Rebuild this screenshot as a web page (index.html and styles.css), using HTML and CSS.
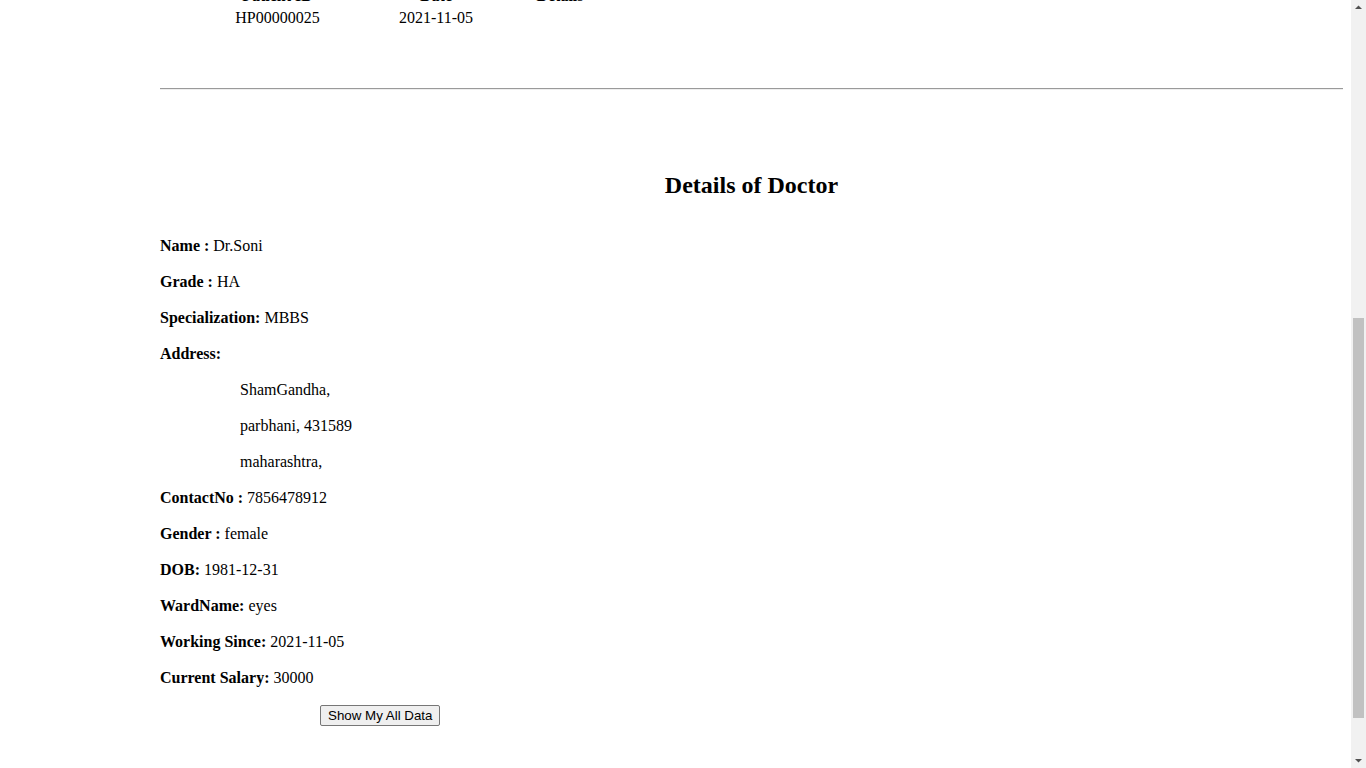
FILE: index.html
```html
<!DOCTYPE html>
<html lang="en">
<head>
<meta charset="utf-8">
<title>Doctor Details</title>
<link rel="stylesheet" href="styles.css">
</head>
<body>
<div class="page">
  <table class="visits">
    <thead>
      <tr>
        <th class="col-id">Patient ID</th>
        <th class="col-date">Date</th>
        <th class="col-details">Details</th>
      </tr>
    </thead>
    <tbody>
      <tr>
        <td class="col-id">HP00000025</td>
        <td class="col-date">2021-11-05</td>
        <td class="col-details"></td>
      </tr>
    </tbody>
  </table>

  <hr class="divider">

  <section class="doctor">
    <h2 class="doctor-title">Details of Doctor</h2>
    <div class="fields">
      <div class="field"><b>Name :</b> Dr.Soni</div>
      <div class="field"><b>Grade :</b> HA</div>
      <div class="field"><b>Specialization:</b> MBBS</div>
      <div class="field"><b>Address:</b></div>
      <div class="field field-indent">ShamGandha,</div>
      <div class="field field-indent">parbhani, 431589</div>
      <div class="field field-indent">maharashtra,</div>
      <div class="field"><b>ContactNo :</b> 7856478912</div>
      <div class="field"><b>Gender :</b> female</div>
      <div class="field"><b>DOB:</b> 1981-12-31</div>
      <div class="field"><b>WardName:</b> eyes</div>
      <div class="field"><b>Working Since:</b> 2021-11-05</div>
      <div class="field"><b>Current Salary:</b> 30000</div>
      <div class="field field-action"><button class="btn" type="button">Show My All Data</button></div>
    </div>
  </section>
</div>

<div class="scrollbar" aria-hidden="true">
  <div class="scroll-arrow">
    <svg width="15" height="15" viewBox="0 0 15 15"><polygon points="4,9 11,9 7.5,5.5" fill="#505050"/></svg>
  </div>
  <div class="scroll-track">
    <div class="scroll-thumb"></div>
  </div>
  <div class="scroll-arrow">
    <svg width="15" height="15" viewBox="0 0 15 15"><polygon points="4,6 11,6 7.5,9.5" fill="#505050"/></svg>
  </div>
</div>
<script src="scroll.js"></script>
</body>
</html>
```

FILE: styles.css
```css
html {
  background: #ffffff;
}

body {
  margin: 8px;
  background: #ffffff;
  font-family: "Liberation Serif", "Times New Roman", serif;
  font-size: 16px;
  line-height: 18px;
  color: #000000;
}

.page {
  margin-left: 152px;
  margin-right: 15px;
  padding-bottom: 100px;
}

.visits {
  border-collapse: separate;
  border-spacing: 2px;
}

.visits th,
.visits td {
  box-sizing: border-box;
  padding: 1px;
  line-height: 18px;
  text-align: center;
  font-weight: normal;
}

.visits th {
  font-weight: bold;
}

.col-id {
  width: 231px;
}

.col-date {
  width: 82px;
}

.col-details {
  width: 162px;
}

.divider {
  display: block;
  height: 0;
  margin: 58px 0 0;
  border: 0;
  border-top: 1px solid #9a9a9a;
  border-bottom: 1px solid #eeeeee;
}

.doctor-title {
  margin: 81px 0 38px;
  font-size: 24px;
  line-height: 28px;
  font-weight: bold;
  text-align: center;
}

.fields {
  display: flex;
  flex-direction: column;
  gap: 18px;
}

.field {
  line-height: 18px;
}

.field-indent {
  padding-left: 80px;
}

.field-action {
  padding-left: 160px;
}

.btn {
  font-family: "Liberation Sans", Arial, sans-serif;
  font-size: 13.333px;
  line-height: 17px;
  padding: 1px 7px;
  border: 1px solid #767676;
  border-radius: 2px;
  background: #efefef;
  color: #000000;
}

/* replica of the browser's classic vertical scrollbar */
.scrollbar {
  position: fixed;
  top: 0;
  right: 0;
  bottom: 0;
  width: 15px;
  display: flex;
  flex-direction: column;
  background: #f1f1f1;
}

.scroll-arrow {
  height: 15px;
  flex: 0 0 15px;
}

.scroll-arrow svg {
  display: block;
}

.scroll-track {
  flex: 1;
  padding: 303px 2px 0;
}

.scroll-thumb {
  height: 400px;
  background: #c1c1c1;
}
```

FILE: scroll.js
```js
function scrollToList() {
  window.scrollTo(0, 24);
}
scrollToList();
window.addEventListener('load', scrollToList);
```
